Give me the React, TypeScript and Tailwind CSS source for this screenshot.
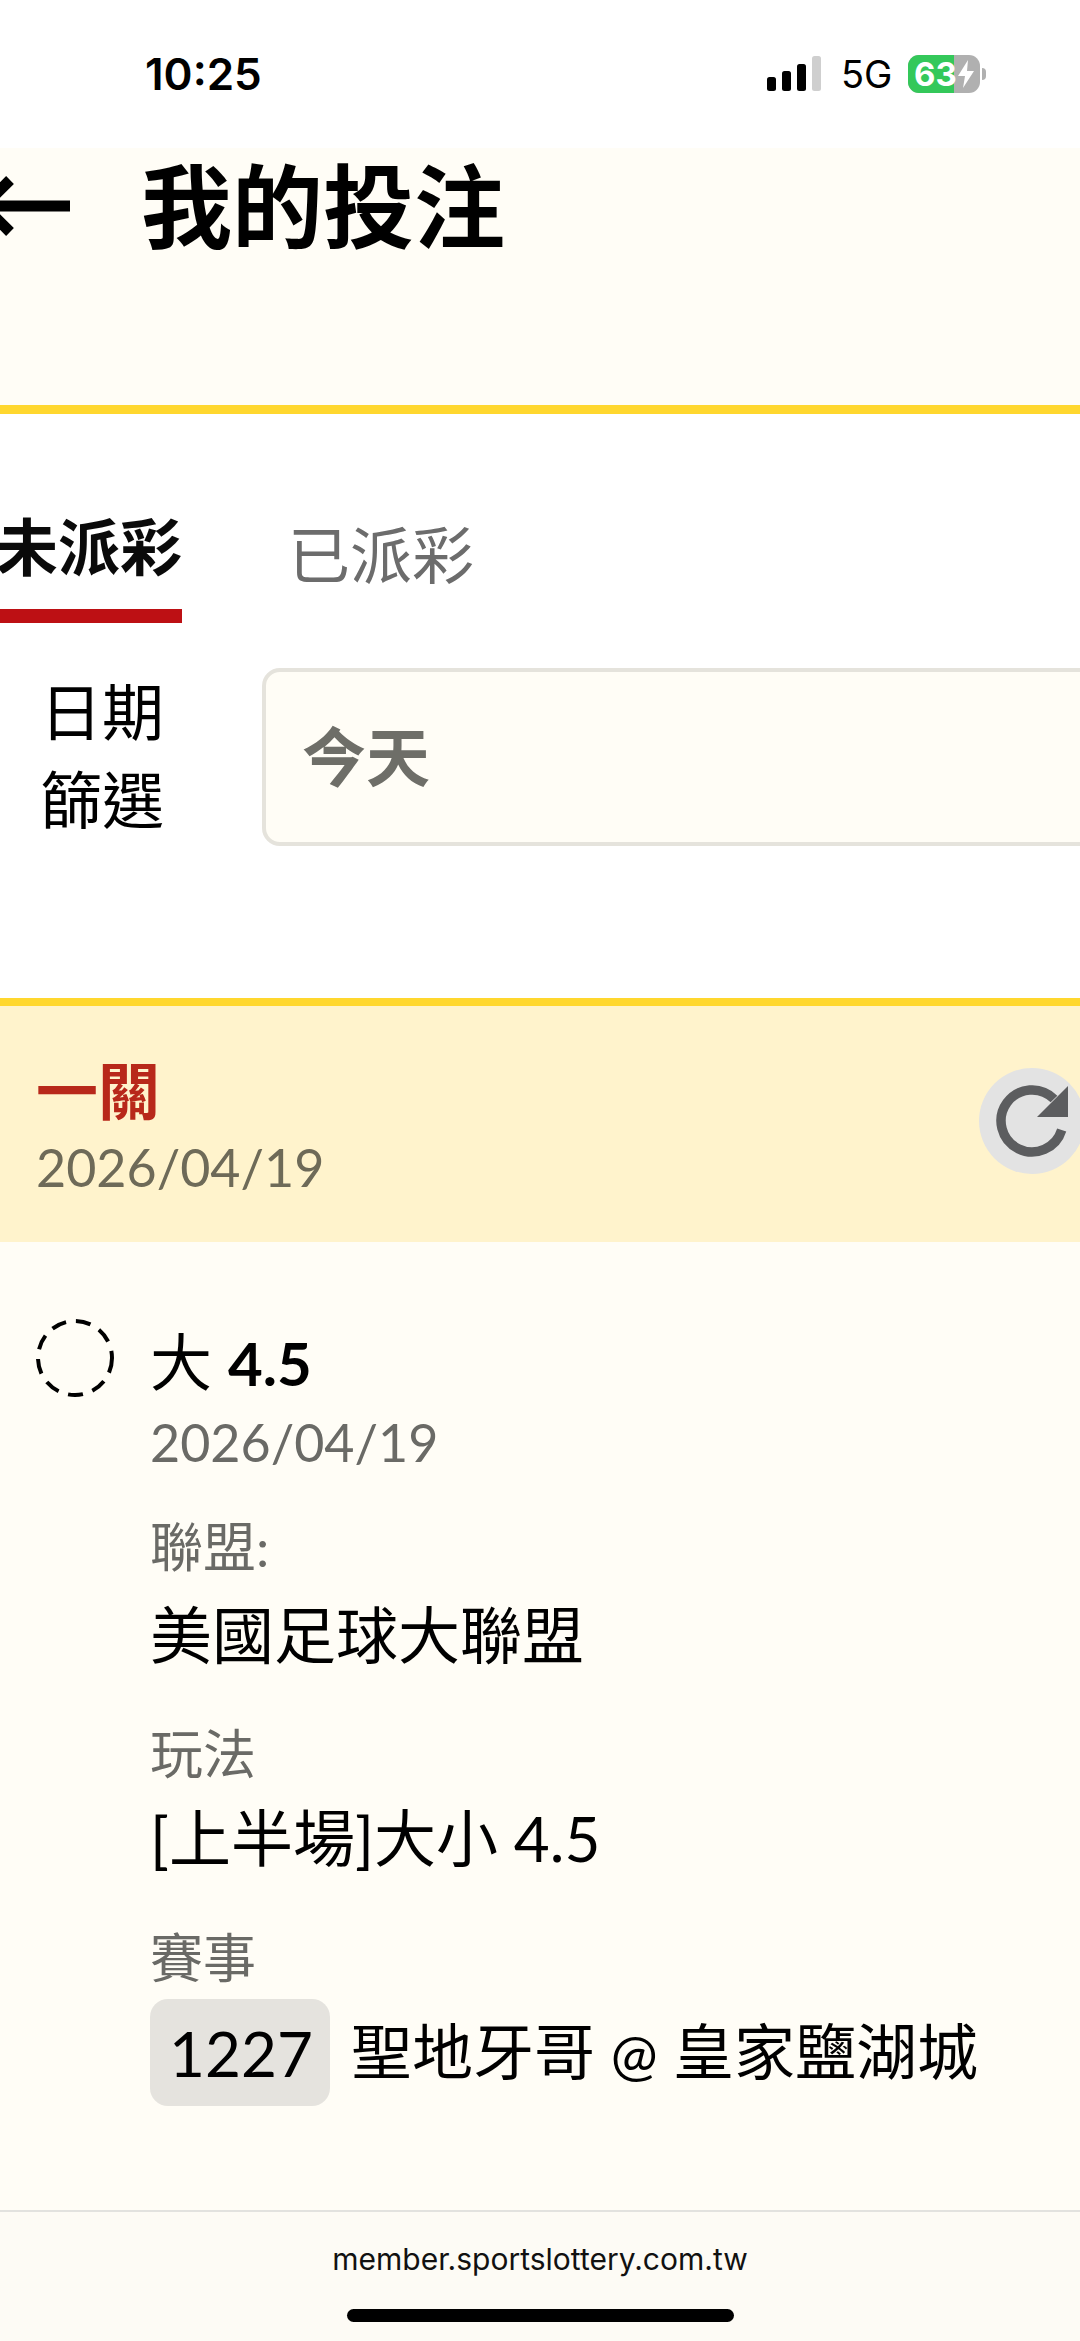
const FONT = "font-['Lato','Noto_Sans_CJK_TC',sans-serif]"

function StatusIcons() {
  return (
    <div className="flex items-center">
      <svg width="55" height="36" viewBox="0 0 55 36" className="mr-[19px]">
        <rect x="0" y="21" width="9" height="14" rx="2.5" fill="#000" />
        <rect x="15" y="15" width="9" height="20" rx="2.5" fill="#000" />
        <rect x="30" y="8" width="9" height="27" rx="2.5" fill="#000" />
        <rect x="45" y="0" width="9" height="35" rx="2.5" fill="#cfcfcf" />
      </svg>
      <span className="w-[67px] font-['Inter',sans-serif] text-[38px] leading-none text-black">5G</span>
      <div className="relative flex h-[38px] w-[72px] overflow-hidden rounded-[11px] bg-[#b0b0b0]">
        <div className="h-full w-[46px] bg-[#34c85a]" />
        <span className="absolute left-[6px] top-[2px] font-['Inter',sans-serif] text-[33px] font-bold leading-[34px] text-white">63</span>
        <svg width="16" height="28" viewBox="0 0 16 28" className="absolute left-[50px] top-[5px]">
          <path d="M10 0 L0 16 H7 L5 28 L16 11 H9 Z" fill="#fff" />
        </svg>
      </div>
      <div className="ml-[2px] h-[12px] w-[4px] rounded-r-full bg-[#b0b0b0]" />
    </div>
  )
}

export default function App() {
  return (
    <div className={`flex h-[2341px] w-[1080px] flex-col overflow-hidden bg-white ${FONT}`}>
      {/* status bar */}
      <div className="flex h-[148px] shrink-0 items-start justify-between pl-[145px] pr-[94px] pt-[52px]">
        <span className="font-['Inter',sans-serif] text-[44px] font-semibold leading-[44px] text-black">10:25</span>
        <div className="pt-[3px]">
          <StatusIcons />
        </div>
      </div>

      {/* page title */}
      <div className="h-[257px] shrink-0 bg-[#fffdf6]">
        <div className="flex items-center pt-[3px]">
          <svg width="72" height="72" viewBox="0 0 72 72" className="shrink-0">
            <path d="M0 36 H70" stroke="#000" strokeWidth="11" fill="none" />
            <path d="M10 10 L-16 36 L10 62" stroke="#000" strokeWidth="11" fill="none" />
          </svg>
          <h1 className="ml-[69px] text-[91px] font-bold leading-[110px] text-black">我的投注</h1>
        </div>
      </div>
      <div className="h-[9px] shrink-0 bg-[#ffd72e]" />

      {/* tabs */}
      <div className="flex h-[209px] shrink-0 items-start">
        <div className="ml-[-4px] flex h-[209px] w-[186px] shrink-0 flex-col items-center justify-end">
          <span className="whitespace-nowrap pb-[22px] text-[62px] font-bold leading-[80px] text-[#0a0a0a]">未派彩</span>
          <div className="h-[14px] w-full bg-[#bd1014]" />
        </div>
        <div className="ml-[106px] whitespace-nowrap pt-[101px] text-[62px] leading-[80px] text-[#6c6c6c]">已派彩</div>
      </div>

      {/* date filter */}
      <div className="flex h-[375px] shrink-0 items-start pt-[45px]">
        <div className="ml-[40px] w-[124px] shrink-0 text-center text-[62px] leading-[88px] text-black">日期<br />篩選</div>
        <div className="ml-[98px] flex h-[178px] w-[900px] shrink-0 items-center rounded-[18px] border-[4px] border-[#e5e3dc] bg-[#fffdf6] pl-[36px]">
          <span className="text-[64px] font-semibold leading-none text-[#6e6e68]">今天</span>
        </div>
      </div>
      <div className="h-[8px] shrink-0 bg-[#ffd72e]" />

      {/* ticket header */}
      <div className="flex h-[236px] shrink-0 items-center justify-between bg-[#fff3cc] pl-[36px]">
        <div className="mt-[8px] flex flex-col">
          <span className="text-[62px] font-bold leading-[78px] text-[#b8281a]">一關</span>
          <span className="text-[52px] leading-[74px] text-[#6e6a58]">2026/04/19</span>
        </div>
        <div className="mr-[-5px] mt-[-6px] flex h-[106px] w-[106px] shrink-0 items-center justify-center rounded-full bg-[#e3e3e3]">
          <svg width="76" height="76" viewBox="0 0 76 76">
            <path d="M67.7 47 A31 31 0 1 1 60 16" stroke="#5c5d5f" strokeWidth="9.5" fill="none" />
            <path d="M43 34 H74 V3 Z" fill="#5c5d5f" />
          </svg>
        </div>
      </div>

      {/* ticket body */}
      <div className="flex min-h-0 flex-1 items-start bg-[#fffdf6] pl-[36px] pt-[80px]">
        <div className="mt-[-3px] h-[78px] w-[78px] shrink-0">
          <svg width="78" height="78" viewBox="0 0 78 78">
            <circle cx="39" cy="39" r="37" stroke="#000" strokeWidth="4" fill="none" strokeDasharray="15 10" />
          </svg>
        </div>
        <div className="ml-[36px] flex flex-col">
          <span className="text-[62px] leading-[80px] text-black">大 <span className="text-[60px] font-bold">4.5</span></span>
          <span className="text-[52px] leading-[78px] text-[#6a6a66]">2026/04/19</span>
          <span className="mt-[33px] text-[53px] leading-[66px] text-[#6a6a66]">聯盟:</span>
          <span className="mt-[15px] text-[62px] leading-[80px] text-black">美國足球大聯盟</span>
          <span className="mt-[46px] text-[53px] leading-[66px] text-[#6a6a66]">玩法</span>
          <span className="mt-[11px] text-[62px] leading-[80px] text-black">[上半場]大小 4.5</span>
          <span className="mt-[47px] text-[53px] leading-[66px] text-[#6a6a66]">賽事</span>
          <div className="mt-[8px] flex items-center">
            <span className="flex h-[107px] w-[180px] items-center justify-center rounded-[18px] bg-[#e5e3de] pl-[2px] text-[62px] leading-none text-black">1227</span>
            <span className="ml-[21px] whitespace-nowrap text-[61px] leading-[80px] text-black">聖地牙哥 <span className="text-[56px]">@</span> 皇家鹽湖城</span>
          </div>
        </div>
      </div>

      {/* browser bar */}
      <div className="flex h-[131px] shrink-0 flex-col items-center border-t-2 border-[#e2e2df] bg-[#fdfbf5]">
        <span className="mt-[29px] font-['Inter',sans-serif] text-[30px] leading-[36px] text-[#111]">member.sportslottery.com.tw</span>
        <div className="mt-[32px] h-[13px] w-[387px] rounded-full bg-black" />
      </div>
    </div>
  )
}
